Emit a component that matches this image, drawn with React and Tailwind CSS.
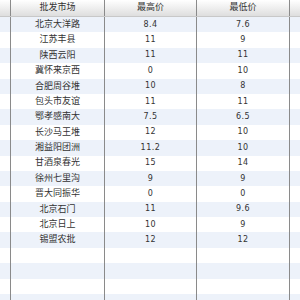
const rows = [
  ["北京大洋路", "8.4", "7.6"],
  ["江苏丰县", "11", "9"],
  ["陕西云阳", "11", "11"],
  ["冀怀来京西", "0", "10"],
  ["合肥周谷堆", "10", "8"],
  ["包头市友谊", "11", "11"],
  ["鄂孝感南大", "7.5", "6.5"],
  ["长沙马王堆", "12", "10"],
  ["湘益阳团洲", "11.2", "10"],
  ["甘酒泉春光", "15", "14"],
  ["徐州七里沟", "9", "9"],
  ["晋大同振华", "0", "0"],
  ["北京石门", "11", "9.6"],
  ["北京日上", "10", "9"],
  ["锡盟农批", "12", "12"],
  ["", "", ""],
  ["", "", ""],
  ["", "", ""],
  ["", "", ""],
];

const cjk = { fontFamily: '"DejaVu Sans", "Noto Sans CJK SC", sans-serif' };

export default function App() {
  return (
    <div className="w-[300px] h-[300px] overflow-hidden bg-white text-[#333]" style={cjk}>
      <div className="flex h-[17px] bg-gradient-to-b from-white to-[#dedede] border-b border-[#c8c8c8] text-[9px]">
        <div className="w-[11px] border-r border-[#8a8a8a]" />
        <div className="w-[94px] border-r border-[#8a8a8a] flex items-center justify-center">批发市场</div>
        <div className="w-[92px] border-r border-[#8a8a8a] flex items-center justify-center">最高价</div>
        <div className="w-[93px] border-r border-[#8a8a8a] flex items-center justify-center">最低价</div>
        <div className="flex-1" />
      </div>
      {rows.map((r, i) => (
        <div
          key={i}
          className={`flex h-[15.4px] ${i % 2 === 0 ? "bg-[#edf2fa]" : "bg-white"}`}
        >
          <div className="w-[11px] border-r border-[#8a8a8a]" />
          <div className="w-[94px] border-r border-[#8a8a8a] flex items-center justify-center text-[9px]">{r[0]}</div>
          <div className="w-[92px] border-r border-[#8a8a8a] flex items-center justify-center text-[8px] tracking-[0.5px]">{r[1]}</div>
          <div className="w-[93px] border-r border-[#8a8a8a] flex items-center justify-center text-[8px] tracking-[0.5px]">{r[2]}</div>
          <div className="flex-1" />
        </div>
      ))}
    </div>
  );
}
